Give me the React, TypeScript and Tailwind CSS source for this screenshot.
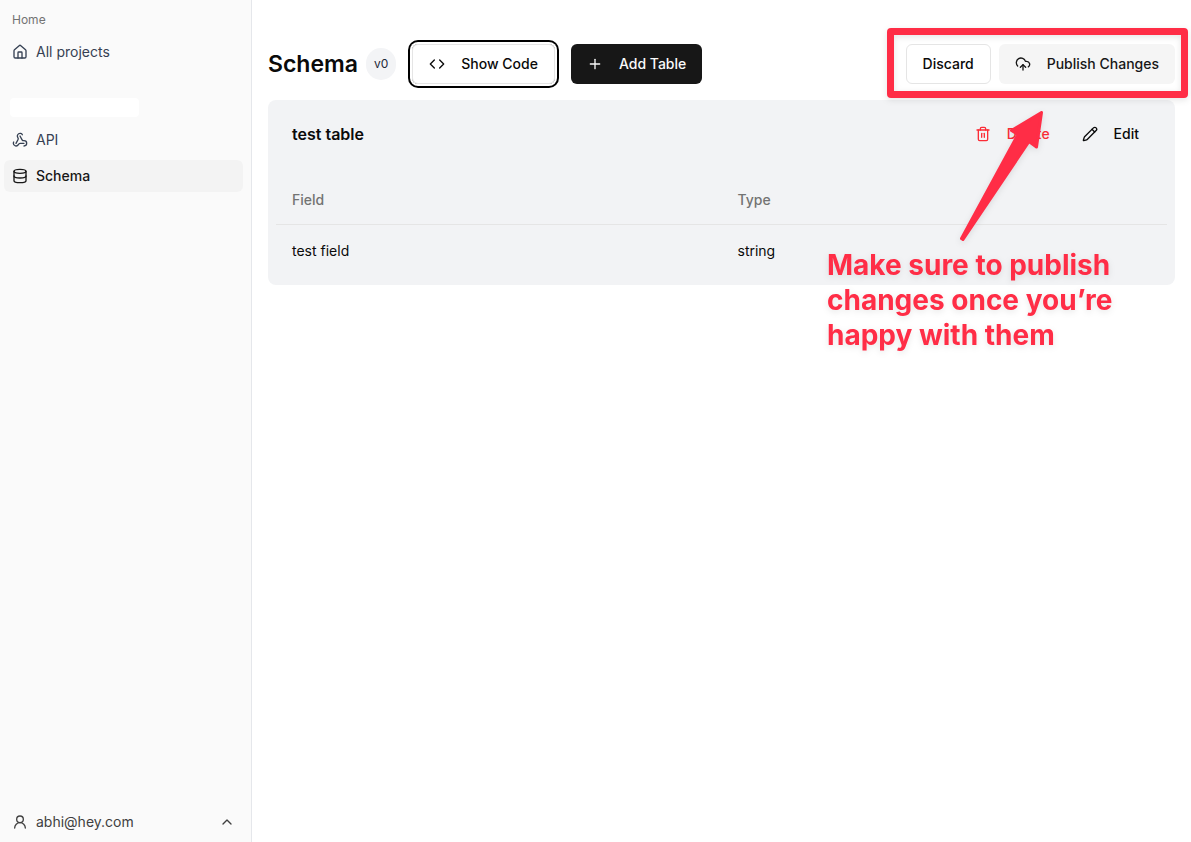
import React from "react";
import {
  ChevronUp,
  CloudUpload,
  Code,
  Database,
  House,
  Pencil,
  Plus,
  Trash2,
  UserRound,
  Webhook,
  type LucideIcon,
} from "lucide-react";

type NavItemProps = { icon: LucideIcon; label: string; active?: boolean };

function NavItem({ icon: Icon, label, active = false }: NavItemProps) {
  return (
    <a
      href="#"
      aria-current={active ? "page" : undefined}
      className={
        active
          ? "flex h-8 items-center gap-2 rounded-md bg-[#f3f3f3] px-2 text-sm font-medium text-neutral-900"
          : "flex h-8 items-center gap-2 rounded-md px-2 text-sm text-gray-700"
      }
    >
      <Icon size={16} />
      {label}
    </a>
  );
}

function Sidebar() {
  return (
    <aside className="flex w-[252px] shrink-0 flex-col border-r border-gray-200 bg-[#fafafa] pr-2 pl-1">
      <nav className="flex flex-col">
        <h2 className="flex h-9 items-center px-2 pt-1 text-xs text-neutral-500">Home</h2>
        <NavItem icon={House} label="All projects" />
      </nav>
      <nav className="mt-[30px] flex flex-col">
        <div className="mb-[7px] ml-[6px] h-[19px] w-[129px] rounded bg-white" />
        <div className="flex flex-col gap-1">
          <NavItem icon={Webhook} label="API" />
          <NavItem icon={Database} label="Schema" active />
        </div>
      </nav>
      <button
        type="button"
        className="mt-auto mb-1 flex h-8 items-center gap-2 px-2 text-sm text-neutral-700"
      >
        <UserRound size={16} />
        abhi@hey.com
        <ChevronUp size={16} className="ml-auto" />
      </button>
    </aside>
  );
}

const fields = [{ name: "test field", type: "string" }];

function Annotation() {
  return (
    <>
      <div className="pointer-events-none absolute top-7 right-[3px] h-[70px] w-[301px] rounded-sm border-[7px] border-[#ff2d46] drop-shadow-[0_2px_3px_rgba(0,0,0,0.1)]" />
      <svg
        aria-hidden="true"
        viewBox="0 0 90 136"
        className="pointer-events-none absolute top-[108px] right-36 h-[136px] w-[90px] drop-shadow-[0_2px_3px_rgba(0,0,0,0.1)]"
      >
        <path
          d="M84.5 4.5 79.5 39 72 33.5 6 131.5 4.5 130.5 61 26.5 54.5 22.5Z"
          fill="#ff2d46"
          stroke="#ff2d46"
          strokeWidth="3"
          strokeLinejoin="round"
        />
      </svg>
      <p className="pointer-events-none absolute top-[248px] right-4 w-[348px] text-[28px] leading-[35px] font-bold text-[#ff2d46] drop-shadow-[0_2px_3px_rgba(0,0,0,0.1)]">
        Make sure to publish
        <br />
        changes once you’re
        <br />
        happy with them
      </p>
    </>
  );
}

export default function App() {
  return (
    <div className="flex min-h-screen bg-white font-['Inter','Liberation_Sans',sans-serif] text-neutral-950">
      <Sidebar />
      <main className="relative min-w-0 flex-1 px-4 pt-11">
        <header className="flex h-10 items-center justify-between">
          <div className="flex items-center gap-4">
            <div className="flex items-center gap-2">
              <h1 className="text-[23px] leading-8 font-semibold">Schema</h1>
              <span className="flex h-8 items-center rounded-full bg-gray-100 px-2 text-xs text-gray-800">
                v0
              </span>
            </div>
            <button
              type="button"
              className="flex h-10 items-center gap-4 rounded-md border border-neutral-200 px-4 text-sm font-medium ring-2 ring-black ring-offset-2"
            >
              <Code size={16} />
              Show Code
            </button>
            <button
              type="button"
              className="flex h-10 items-center gap-4 rounded-md bg-neutral-900 px-4 text-sm font-medium text-neutral-50"
            >
              <Plus size={16} />
              Add Table
            </button>
          </div>
          <div className="flex items-center gap-2">
            <button
              type="button"
              className="h-10 rounded-md border border-neutral-200 px-4 text-sm font-medium"
            >
              Discard
            </button>
            <button
              type="button"
              className="flex h-10 items-center gap-4 rounded-md bg-neutral-100 px-4 text-sm font-medium text-neutral-900"
            >
              <CloudUpload size={16} />
              Publish Changes
            </button>
          </div>
        </header>

        <section className="mt-4 rounded-lg bg-[#f2f3f5] px-2 pt-4 pb-2">
          <div className="mb-6 flex h-9 items-center justify-between pr-3 pl-4">
            <h2 className="font-semibold">test table</h2>
            <div className="flex">
              <button
                type="button"
                className="flex h-9 items-center gap-4 px-4 text-sm font-medium text-red-500"
              >
                <Trash2 size={16} />
                Delete
              </button>
              <button
                type="button"
                className="flex h-9 items-center gap-4 px-4 text-sm font-medium"
              >
                <Pencil size={16} />
                Edit
              </button>
            </div>
          </div>
          <table className="w-full table-fixed text-left text-sm">
            <thead>
              <tr className="h-12 border-b border-neutral-200 text-neutral-500">
                <th className="px-4 font-medium">Field</th>
                <th className="px-4 font-medium">Type</th>
              </tr>
            </thead>
            <tbody>
              {fields.map((field) => (
                <tr key={field.name} className="h-[53px]">
                  <td className="px-4">{field.name}</td>
                  <td className="px-4">{field.type}</td>
                </tr>
              ))}
            </tbody>
          </table>
        </section>
        <Annotation />
      </main>
    </div>
  );
}
